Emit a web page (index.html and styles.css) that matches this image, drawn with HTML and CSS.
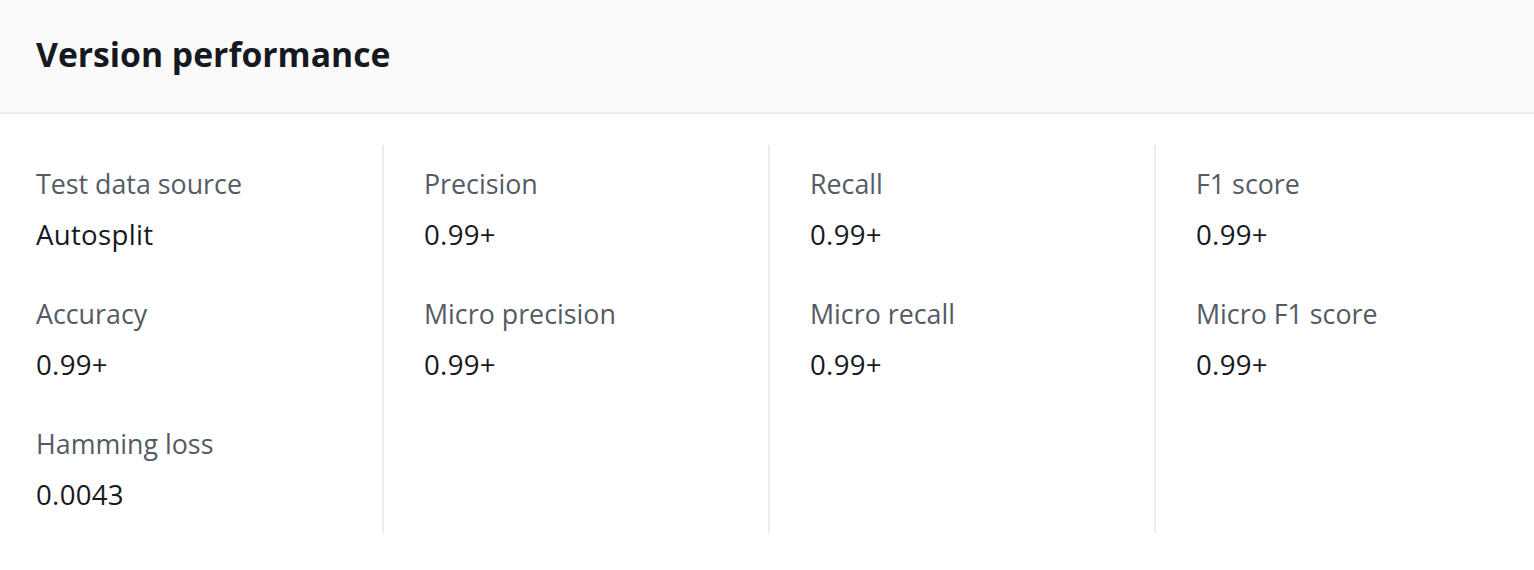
FILE: index.html
```html
<!DOCTYPE html>
<html lang="en">
<head>
<meta charset="utf-8">
<title>Version performance</title>
<link rel="stylesheet" href="styles.css">
</head>
<body>
<section class="panel">
  <header class="panel-header">
    <h2 class="panel-title">Version performance</h2>
  </header>
  <div class="panel-body">
    <div class="metrics">
      <div class="col">
        <div class="kv"><div class="label">Test data source</div><div class="value">Autosplit</div></div>
        <div class="kv"><div class="label">Accuracy</div><div class="value">0.99+</div></div>
        <div class="kv"><div class="label">Hamming loss</div><div class="value">0.0043</div></div>
      </div>
      <div class="col">
        <div class="kv"><div class="label">Precision</div><div class="value">0.99+</div></div>
        <div class="kv"><div class="label">Micro precision</div><div class="value">0.99+</div></div>
      </div>
      <div class="col">
        <div class="kv"><div class="label">Recall</div><div class="value">0.99+</div></div>
        <div class="kv"><div class="label">Micro recall</div><div class="value">0.99+</div></div>
      </div>
      <div class="col">
        <div class="kv"><div class="label">F1 score</div><div class="value">0.99+</div></div>
        <div class="kv"><div class="label">Micro F1 score</div><div class="value">0.99+</div></div>
      </div>
    </div>
  </div>
</section>
</body>
</html>
```
FILE: styles.css
```css
html, body {
  margin: 0;
  padding: 0;
  background: #ffffff;
}
body {
  font-family: "Open Sans", "Noto Sans", "Liberation Sans", sans-serif;
  color: #16191f;
}
.panel {
  width: 1534px;
}
.panel-header {
  background: #fafafa;
  border-bottom: 2px solid #eaeded;
  height: 114px;
  box-sizing: border-box;
  display: flex;
  align-items: center;
  padding-left: 36px;
  padding-bottom: 4px;
}
.panel-title {
  margin: 0;
  font-size: 33.7px;
  font-weight: 700;
  line-height: 40px;
  color: #16191f;
}
.panel-body {
  padding: 31px 0 0 36px;
}
.metrics {
  display: grid;
  grid-template-columns: 346px 386px 386px 1fr;
  height: 388px;
}
.col {
  display: flex;
  flex-direction: column;
  gap: 40px;
  padding-top: 19px;
}
.col + .col {
  border-left: 2px solid #eaeded;
  padding-left: 40px;
}
.kv {
  display: flex;
  flex-direction: column;
  gap: 10px;
}
.label {
  font-size: 26.8px;
  line-height: 40px;
  color: #545b64;
}
.value {
  font-size: 27.6px;
  line-height: 40px;
  letter-spacing: 0.3px;
  color: #16191f;
}
```
